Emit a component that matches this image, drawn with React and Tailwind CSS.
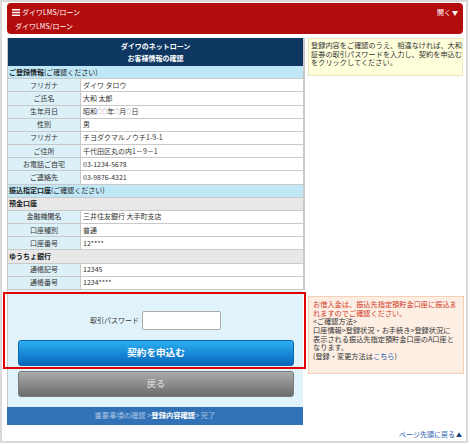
import React from "react";

const Row = ({ label, value }) => (
  <div className="flex h-[13.18px] border-b border-[#c9c9c9]">
    <div className="w-[73px] shrink-0 bg-[#dcf0f8] border-r border-[#c9c9c9] flex items-center justify-center text-[#333]">
      {label}
    </div>
    <div className="flex-1 bg-white pl-[2px] flex items-center text-[#333] whitespace-nowrap">
      {value}
    </div>
  </div>
);

const Section = ({ bold, rest }) => (
  <div className="h-[13.18px] border-b border-[#c9c9c9] bg-[#bfe7f6] flex items-center pl-[1px] text-[#222]">
    <span className="font-bold">{bold}</span>
    {rest && <span>{rest}</span>}
  </div>
);

const Sub = ({ label }) => (
  <div className="h-[13.18px] border-b border-[#c9c9c9] bg-[#e8e8e8] flex items-center pl-[1px] font-bold text-[#222]">
    {label}
  </div>
);

const C = () => <span className="text-[4.5px] mx-[0.3px]">○</span>;

export default function App() {
  return (
    <div className="relative w-[470px] h-[444px] bg-white font-['Noto_Sans_CJK_JP',sans-serif] text-[7px] leading-[9px]">
      <div className="w-[468px] h-[443px] border-2 border-[#dadada] flex flex-col">
        {/* red header */}
        <div className="ml-[5px] mt-[1px] w-[456px] h-[31px] rounded-[4px] bg-[#b30c0c] text-white relative">
          <div className="flex items-center pt-[5px] pl-[5px]">
            <svg width="8" height="7" viewBox="0 0 8 7" className="mr-[2px]">
              <rect x="0" y="0" width="8" height="1.5" fill="#fff" />
              <rect x="0" y="2.75" width="8" height="1.5" fill="#fff" />
              <rect x="0" y="5.5" width="8" height="1.5" fill="#fff" />
            </svg>
            <span>ダイワLMS/ローン</span>
          </div>
          <div className="pl-[8px] mt-[5px]">ダイワLMS/ローン</div>
          <div className="absolute right-[5px] top-[5px] flex items-center">
            <span>開く</span>
            <span className="text-[6px] ml-[1px]">▼</span>
          </div>
        </div>

        {/* row 1 */}
        <div className="flex items-start ml-[5px] mt-[4px]">
          <div className="w-[298px] border-l border-r-2 border-[#c9c9c9]">
            <div className="h-[28px] bg-[#0e3762] text-white font-bold flex flex-col items-center justify-center leading-[12px]">
              <div>ダイワのネットローン</div>
              <div>お客様情報の確認</div>
            </div>
            <Section bold="ご登録情報" rest="(ご確認ください)" />
            <Row label="フリガナ" value="ダイワ タロウ" />
            <Row label="ご氏名" value="大和 太郎" />
            <Row
              label="生年月日"
              value={
                <span className="flex items-center">
                  昭和<C /><C />年<C />月<C />日
                </span>
              }
            />
            <Row label="性別" value="男" />
            <Row label="フリガナ" value="チヨダクマルノウチ1-9-1" />
            <Row label="ご住所" value="千代田区丸の内1－9－1" />
            <Row label="お電話ご自宅" value="03-1234-5678" />
            <Row label="ご連絡先" value="03-9876-4321" />
            <Section bold="振込指定口座" rest="(ご確認ください)" />
            <Sub label="預金口座" />
            <Row label="金融機関名" value="三井住友銀行 大手町支店" />
            <Row label="口座種別" value="普通" />
            <Row label="口座番号" value="12****" />
            <Sub label="ゆうちょ銀行" />
            <Row label="通帳記号" value="12345" />
            <Row label="通帳番号" value="1234****" />
          </div>
          <div className="ml-[3px] w-[155px] h-[38px] bg-[#ffffdc] border border-[#ebe8bd] px-[2px] pt-[2px] text-[7.2px] leading-[8.6px] text-[#333] whitespace-nowrap">
            登録内容をご確認のうえ、相違なければ、大和
            <br />
            証券の取引パスワードを入力し、契約を申込む
            <br />
            をクリックしてください。
          </div>
        </div>

        {/* row 2 */}
        <div className="flex items-start ml-[5px]">
          <div className="w-[296px]">
            <div className="h-[117px] bg-[#e1f3fa] border-l border-[#c9c9c9] pt-[21px] px-[10px] flex flex-col">
              <div className="flex items-center justify-center">
                <span className="text-[#333] mr-[3px]">取引パスワード</span>
                <div className="w-[79px] h-[19px] bg-white border border-[#aaa] rounded-[2px]" />
              </div>
              <div className="mt-[10px] h-[26px] w-[276px] rounded-[3px] border border-[#0b64b0] bg-gradient-to-b from-[#2cb0f2] to-[#0866bb] flex items-center justify-center text-white font-bold text-[9.6px]">
                契約を申込む
              </div>
              <div className="mt-[5px] h-[26px] w-[276px] rounded-[3px] border border-[#7a7a7a] bg-gradient-to-b from-[#acacac] to-[#6c6c6c] flex items-center justify-center text-[#e6e6e6] text-[9.3px]">
                戻る
              </div>
            </div>
            <div className="h-[18px] bg-[#3172b6] flex items-center justify-center text-[#a9c6e6] text-[7.3px] whitespace-nowrap">
              <span>重要事項の確認 &gt; </span>
              <span className="text-white font-bold">登録内容確認</span>
              <span> &gt; 完了</span>
            </div>
          </div>
          <div className="ml-[5px] mt-[6px] w-[156px] h-[78px] bg-[#fdeee3] border border-[#f5d0b6] pl-[4px] pt-[3px] text-[7.2px] leading-[8.7px] text-[#333] whitespace-nowrap">
            <div className="text-[#d23b2a]">
              お借入金は、振込先指定預貯金口座に振込ま
              <br />
              れますのでご確認ください。
            </div>
            <div>&lt;ご確認方法&gt;</div>
            <div>口座情報&gt;登録状況・お手続き&gt;登録状況に</div>
            <div>表示される振込先指定預貯金口座のA口座と</div>
            <div>なります。</div>
            <div>
              (登録・変更方法は<span className="text-[#1d5bb8]">こちら</span>)
            </div>
          </div>
        </div>

        {/* page top */}
        <div className="mt-[5px] pr-[4px] flex justify-end items-center text-[#2a5fb0] text-[7px]">
          <span>ページ先頭に戻る</span>
          <span className="text-[6px] ml-[1px] text-[#1c3f7a]">▲</span>
        </div>
      </div>

      {/* red annotation box */}
      <div className="absolute left-[3px] top-[292px] w-[303px] h-[77px] border-2 border-[#e30000] pointer-events-none" />
    </div>
  );
}
